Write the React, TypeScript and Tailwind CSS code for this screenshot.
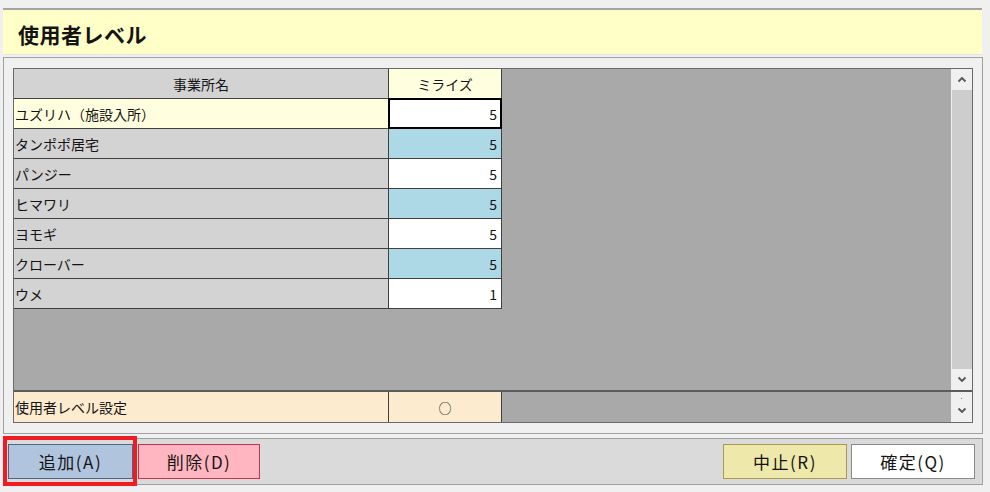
import React from 'react';

const rows = [
  { name: 'ユズリハ（施設入所）', value: 5 },
  { name: 'タンポポ居宅', value: 5 },
  { name: 'パンジー', value: 5 },
  { name: 'ヒマワリ', value: 5 },
  { name: 'ヨモギ', value: 5 },
  { name: 'クローバー', value: 5 },
  { name: 'ウメ', value: 1 },
];

function Chevron({ up = false }: { up?: boolean }) {
  return (
    <svg width="10" height="7" viewBox="0 0 10 7">
      <polyline
        points={up ? '1.5,5.5 5,2 8.5,5.5' : '1.5,1.5 5,5 8.5,1.5'}
        fill="none"
        stroke="#555"
        strokeWidth="1.8"
      />
    </svg>
  );
}

export default function App() {
  return (
    <div className="w-[990px] h-[492px] bg-[#f0f0f0] pt-[8px] px-[3px] text-[#141414] font-['Noto_Sans_CJK_JP',sans-serif] overflow-hidden">
      {/* Title */}
      <div className="h-[47px] mr-[5px] border-t-2 border-[#a4a4a4] border-b border-b-[#e4e4e4] bg-[#ffffc8] flex items-center pl-[15px] pt-[4px]">
        <span className="text-[21px] font-bold leading-none tracking-[0.5px]">使用者レベル</span>
      </div>

      {/* Grid panel */}
      <div className="mt-[2px] mr-[4px] h-[377px] border border-[#a0a0a0] pt-[10px] px-[9px]">
        <div className="h-[355px] border border-[#6a6a6a] flex flex-col text-[14px] leading-none">
          <div className="h-[321px] flex">
            <div className="flex-1 bg-[#a9a9a9]">
              <div className="flex h-[30px] border-b border-[#404040] w-[488px]">
                <div className="w-[375px] bg-[#d3d3d3] border-r border-[#404040] flex items-center justify-center">事業所名</div>
                <div className="w-[113px] bg-[#ffffe0] border-r border-[#404040] flex items-center justify-center">ミライズ</div>
              </div>
              {rows.map((r, i) => (
                <div key={r.name} className="flex h-[30px] border-b border-[#404040] w-[488px]">
                  <div className={`w-[375px] border-r border-[#404040] flex items-center pl-[1px] ${i === 0 ? 'bg-[#ffffe0]' : 'bg-[#d3d3d3]'}`}>
                    {r.name}
                  </div>
                  <div className={`relative w-[113px] border-r border-[#404040] flex items-center justify-end pr-[4px] ${i % 2 === 1 ? 'bg-[#add8e6]' : 'bg-white'}`}>
                    {r.value}
                    {i === 0 && <span className="absolute -left-[1px] -top-[1px] -right-[1px] -bottom-[1px] border-2 border-black" />}
                  </div>
                </div>
              ))}
            </div>
            {/* vertical scrollbar */}
            <div className="w-[21px] bg-[#f0f0f0] flex flex-col">
              <div className="h-[21px] flex items-center justify-center"><Chevron up /></div>
              <div className="flex-1 ml-[1px] bg-[#cdcdcd]" />
              <div className="h-[21px] flex items-center justify-center"><Chevron /></div>
            </div>
          </div>
          <div className="h-[2px] bg-[#5c5c5c]" />
          {/* footer row */}
          <div className="h-[30px] flex">
            <div className="w-[375px] bg-[#fdebd0] border-r border-[#404040] flex items-center pl-[1px]">使用者レベル設定</div>
            <div className="w-[113px] bg-[#fdebd0] border-r border-[#404040] flex items-center justify-center text-[13px]">○</div>
            <div className="flex-1 bg-[#a9a9a9]" />
            <div className="w-[21px] bg-[#f0f0f0] flex flex-col items-center pt-[6px]">
              <div className="w-[1px] h-[1px] bg-[#888]" />
              <div className="mt-[8px]"><Chevron /></div>
            </div>
          </div>
        </div>
      </div>

      {/* Bottom bar */}
      <div className="mt-[4px] mr-[4px] h-[47px] border border-[#a0a0a0] bg-[#dadada] flex items-center pl-[4px] pr-[7px] text-[17px] tracking-[1.5px]">
        <div className="relative">
          <button className="w-[125px] h-[35px] bg-[#b0c4de] border border-[#4f6684] flex items-center justify-center">追加(A)</button>
          <span className="absolute -left-[5px] -right-[4px] -top-[8px] -bottom-[7px] border-4 border-[#ee1c25]" />
        </div>
        <button className="ml-[5px] w-[122px] h-[35px] bg-[#ffb6c1] border border-[#c8324a] flex items-center justify-center">削除(D)</button>
        <div className="flex-1" />
        <button className="w-[124px] h-[35px] bg-[#eee8aa] border border-[#a89a50] flex items-center justify-center">中止(R)</button>
        <button className="ml-[4px] w-[124px] h-[35px] bg-white border border-[#8a8a8a] flex items-center justify-center">確定(Q)</button>
      </div>
    </div>
  );
}
